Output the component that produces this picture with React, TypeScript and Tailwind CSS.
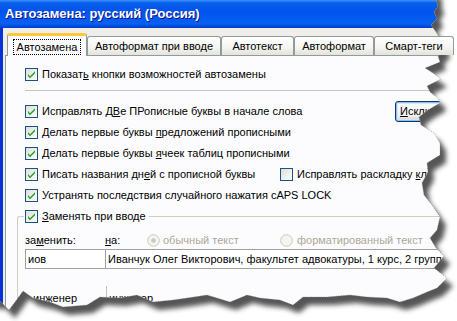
import React from "react";

const Check = ({ checked = true }: { checked?: boolean }) => (
  <svg width="13" height="13" viewBox="0 0 13 13" className="shrink-0">
    <defs>
      <linearGradient id="cbg" x1="0" y1="0" x2="1" y2="1">
        <stop offset="0" stopColor="#DCDCD7" />
        <stop offset="1" stopColor="#FFFFFF" />
      </linearGradient>
    </defs>
    <rect x="0.5" y="0.5" width="12" height="12" fill="url(#cbg)" stroke="#1C5180" />
    {checked && (
      <path d="M3 6 L5 8.2 L10 3.2 L10 5.2 L5 10.2 L3 8 Z" fill="#21A121" />
    )}
  </svg>
);

const Radio = () => (
  <svg width="13" height="13" viewBox="0 0 13 13" className="shrink-0">
    <circle cx="6.5" cy="6.5" r="5.8" fill="#F4F4F0" stroke="#CAC8BB" />
    <circle cx="6.5" cy="6.5" r="2.3" fill="#CAC8BB" />
  </svg>
);

const Radio2 = () => (
  <svg width="13" height="13" viewBox="0 0 13 13" className="shrink-0">
    <circle cx="6.5" cy="6.5" r="5.8" fill="#F4F4F0" stroke="#CAC8BB" />
  </svg>
);

const Row = ({ children, checked = true }: { children: React.ReactNode; checked?: boolean }) => (
  <div className="flex h-[21px] items-center">
    <Check checked={checked} />
    <span className="ml-[4px] whitespace-nowrap">{children}</span>
  </div>
);

const pts: [number, number][] = [
  [-10, -10], [436, -10], [436, 0], [438, 6], [434, 12], [437, 19], [431, 25], [436, 32], [441, 40], [444, 50],
  [438, 56], [440, 62], [425, 68], [433, 73], [441, 79], [427, 86], [430, 92], [438, 98], [440, 103],
  [428, 110], [419, 117], [421, 125], [434, 133], [440, 143], [440, 155], [427, 163], [428, 172],
  [422, 183], [424, 195], [432, 205], [440, 217], [437, 230], [430, 238], [436, 248], [444, 256],
  [434, 268], [447, 278], [437, 288], [427, 292], [413, 298], [400, 302], [387, 298], [367, 297],
  [350, 295], [327, 297], [303, 297], [293, 305], [280, 300], [260, 298], [247, 295], [230, 302],
  [217, 298], [207, 295], [187, 298], [173, 300], [153, 302], [137, 295], [120, 298], [100, 297],
  [87, 305], [63, 307], [50, 302], [33, 298], [23, 291], [15, 302], [9, 310], [0, 301], [-10, 301],
];
const poly = "M" + pts.map((p) => p.join(" ")).join(" L") + " Z";
const outside = `M-20 -20 H480 V340 H-20 Z ${poly}`;

const Torn = () => (
  <svg className="pointer-events-none absolute left-0 top-0" width="457" height="321" viewBox="0 0 457 321">
    <defs>
      <clipPath id="outsideClip">
        <path d={outside} clipRule="evenodd" />
      </clipPath>
      <filter id="blurF" x="-10%" y="-10%" width="120%" height="120%">
        <feGaussianBlur stdDeviation="2.4" />
      </filter>
    </defs>
    <path d={outside} fillRule="evenodd" fill="#FFFFFF" />
    <g clipPath="url(#outsideClip)">
      <path d={poly} transform="translate(6 8)" fill="#383838" opacity="0.85" filter="url(#blurF)" />
    </g>
    <path d={poly} fill="none" stroke="#8a8a8a" strokeWidth="0.7" strokeDasharray="1 1.5" />
  </svg>
);

export default function App() {
  return (
    <div className="relative h-[321px] w-[457px] overflow-hidden bg-white font-['Liberation_Sans',Arial,sans-serif] text-[11px] text-black">
      <div className="flex h-[340px] w-[480px] flex-col">
        <div className="flex h-[28px] shrink-0 items-center bg-[linear-gradient(180deg,#3d95ff_0%,#0a5fea_10%,#0053ee_40%,#0760f2_85%,#0049d9_94%,#003dd7_100%)] pl-[5px] text-[13px] font-bold text-white [text-shadow:1px_1px_#0f1089]">
          Автозамена: русский (Россия)
        </div>
        <div className="flex-1 border-l-[3px] border-[#0831D9] bg-[#EFEEE9] pl-[2px] pt-[5px]">
          <div className="relative z-10 flex h-[23px] items-end pl-[2px]">
            <div className="flex h-[23px] w-[80px] items-center justify-center rounded-t-[3px] border border-b-0 border-[#919B9C] border-t-[3px] border-t-[#FFC83C] bg-[#FCFCFE] pt-[1px]">
              <span className="px-[3px] py-[1px] leading-[12px] outline-1 outline-dotted outline-black">Автозамена</span>
            </div>
            {[
              ["Автоформат при вводе", "w-[134px]"],
              ["Автотекст", "w-[73px]"],
              ["Автоформат", "w-[80px]"],
              ["Смарт-теги", "w-[80px]"],
            ].map(([t, w]) => (
              <div
                key={t}
                className={`mb-px flex h-[19px] ${w} items-center justify-center rounded-t-[3px] border border-b-0 border-[#919B9C] bg-[linear-gradient(180deg,#ffffff_0%,#f4f4f0_60%,#e3e3dc_100%)] pt-[1px]`}
              >
                {t}
              </div>
            ))}
          </div>
          <div className="-mt-px h-[300px] border border-[#919B9C] bg-[#FCFCFE] pl-[11px] pt-[8px]">
            <div className="pl-[8px]">
              <Row>
                Показат<u>ь</u> кнопки возможностей автозамены
              </Row>
            </div>
            <div className="ml-[8px] mt-[5px] h-px w-[420px] bg-[#C7C6BD]" />
            <div className="mt-[10px] pl-[8px]">
              <div className="flex h-[21px] items-center">
                <div className="w-[370px]">
                  <Row>
                    Исправлять Д<u>В</u>е ПРописные буквы в начале слова
                  </Row>
                </div>
                <div className="flex h-[21px] w-[76px] items-center rounded-[3px] border border-[#003C74] bg-[linear-gradient(180deg,#ffffff_0%,#f2f2ee_70%,#d6d0c5_100%)] pl-[4px] shadow-[inset_0_0_0_1px_#9DB9EB,inset_0_0_0_2px_#CEE7FF]">
                  <u>И</u>сключения...
                </div>
              </div>
              <Row>
                Делать первые буквы <u>п</u>редложений прописными
              </Row>
              <Row>
                Делать первые буквы <u>я</u>чеек таблиц прописными
              </Row>
              <div className="flex h-[21px] items-center">
                <div className="w-[255px]">
                  <Row>
                    Писать названия дн<u>е</u>й с прописной буквы
                  </Row>
                </div>
                <Row checked={false}>
                  Исправлять раскладку <u>к</u>лавиатуры
                </Row>
              </div>
              <Row>
                Устранять после<u>д</u>ствия случайного нажатия cAPS LOCK
              </Row>
            </div>
            <div className="mt-[10px] rounded-tl-[3px] border-l border-t border-[#D0D0BF]">
              <div className="-mt-[11px] flex h-[21px] items-center">
                <div className="ml-[6px] bg-[#FCFCFE] pl-[1px] pr-[3px]">
                  <Row>
                    <u>З</u>аменять при вводе
                  </Row>
                </div>
              </div>
              <div className="ml-[7px] mt-[5px] flex h-[17px] items-center">
                <div className="w-[80px]">
                  за<u>м</u>енить:
                </div>
                <div className="w-[42px]">
                  <u>н</u>а:
                </div>
                <div className="flex w-[133px] items-center text-[#ACA899]">
                  <Radio />
                  <span className="ml-[3px]">обычный текст</span>
                </div>
                <div className="flex items-center text-[#ACA899]">
                  <Radio2 />
                  <span className="ml-[4px]">форматированный текст</span>
                </div>
              </div>
              <div className="ml-[7px] flex h-[20px]">
                <div className="flex w-[81px] items-center border border-[#A0A0A0] bg-white pl-[2px]">иов</div>
                <div className="-ml-px flex w-[360px] items-center whitespace-nowrap border border-[#A0A0A0] bg-white pl-[2px]">
                  Иванчук Олег Викторович, факультет адвокатуры, 1 курс, 2 группа
                </div>
              </div>
              <div className="ml-[7px] mt-[17px] flex h-[22px]">
                <div className="flex w-[81px] items-end pb-[2px] pl-[8px]">инженер</div>
                <div className="flex items-end border-l border-[#C0C0C0] pb-[2px] pl-[2px]">инженер</div>
              </div>
            </div>
          </div>
        </div>
      </div>
      <Torn />
    </div>
  );
}
